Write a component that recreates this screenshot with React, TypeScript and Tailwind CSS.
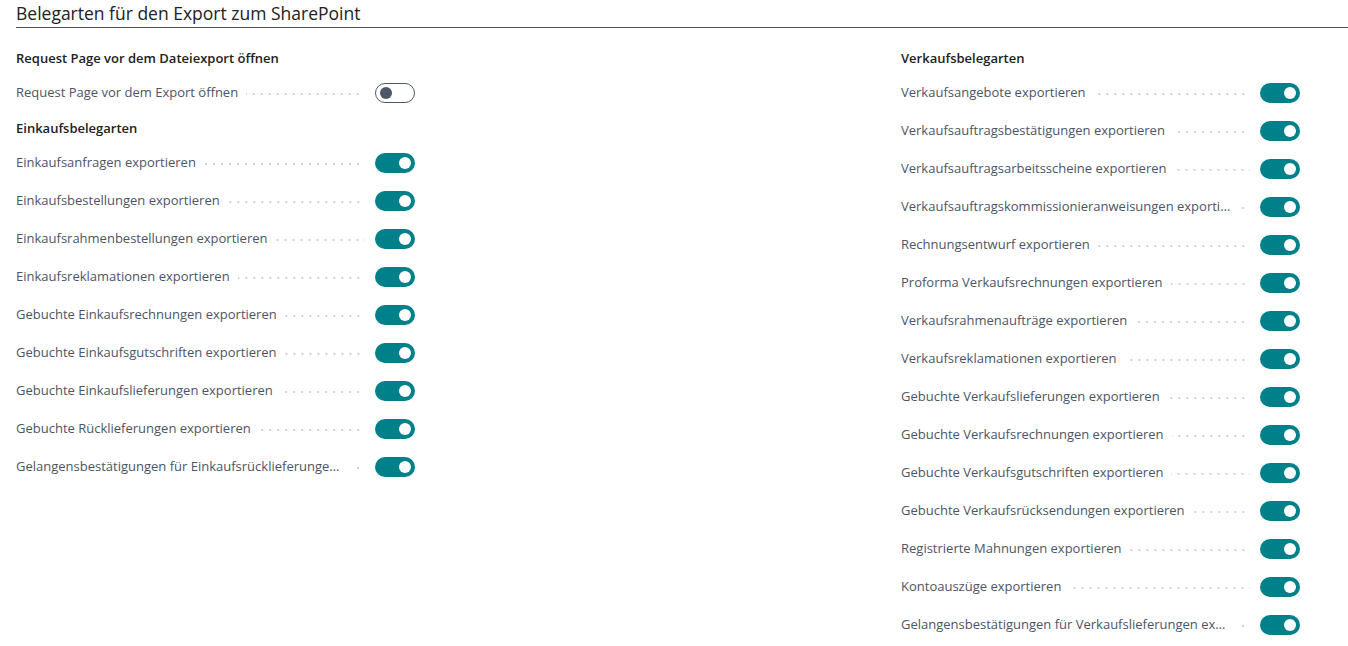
import React from 'react';

const FONT = "font-['Open_Sans','Noto_Sans',sans-serif]";

const EINKAUF = [
  'Einkaufsanfragen exportieren',
  'Einkaufsbestellungen exportieren',
  'Einkaufsrahmenbestellungen exportieren',
  'Einkaufsreklamationen exportieren',
  'Gebuchte Einkaufsrechnungen exportieren',
  'Gebuchte Einkaufsgutschriften exportieren',
  'Gebuchte Einkaufslieferungen exportieren',
  'Gebuchte Rücklieferungen exportieren',
  'Gelangensbestätigungen für Einkaufsrücklieferungen exportieren',
];

const VERKAUF = [
  'Verkaufsangebote exportieren',
  'Verkaufsauftragsbestätigungen exportieren',
  'Verkaufsauftragsarbeitsscheine exportieren',
  'Verkaufsauftragskommissionieranweisungen exportieren',
  'Rechnungsentwurf exportieren',
  'Proforma Verkaufsrechnungen exportieren',
  'Verkaufsrahmenaufträge exportieren',
  'Verkaufsreklamationen exportieren',
  'Gebuchte Verkaufslieferungen exportieren',
  'Gebuchte Verkaufsrechnungen exportieren',
  'Gebuchte Verkaufsgutschriften exportieren',
  'Gebuchte Verkaufsrücksendungen exportieren',
  'Registrierte Mahnungen exportieren',
  'Kontoauszüge exportieren',
  'Gelangensbestätigungen für Verkaufslieferungen exportieren',
];

function Toggle({ on }: { on: boolean }) {
  if (on) {
    return (
      <span className="flex h-5 w-10 shrink-0 items-center justify-end rounded-full bg-[#00818a] pr-[4px]">
        <span className="h-3 w-3 rounded-full bg-white" />
      </span>
    );
  }
  return (
    <span className="flex h-5 w-10 shrink-0 items-center rounded-full border border-[#4f5666] bg-white pl-[4px]">
      <span className="h-3 w-3 rounded-full bg-[#4f5666]" />
    </span>
  );
}

function Field({ label, on = true }: { label: string; on?: boolean }) {
  return (
    <div className="flex h-[38px] w-[399px] items-center">
      <div className="flex min-w-0 flex-1 items-center pr-[10px]">
        <span className="truncate text-[13px] text-[#4c5566]">{label}</span>
        <span className="ml-[8px] mt-[2px] h-[2px] min-w-[10px] flex-1 bg-[linear-gradient(to_right,#d2d2d2_2px,transparent_2px)] bg-[length:8px_2px] bg-right bg-repeat-x" />
      </div>
      <Toggle on={on} />
    </div>
  );
}

function GroupTitle({ children, className = '' }: { children: React.ReactNode; className?: string }) {
  return (
    <div className={`mb-[6px] h-5 text-[13px] font-semibold leading-5 text-[#212121] ${className}`}>
      {children}
    </div>
  );
}

export default function App() {
  return (
    <div className={`${FONT} min-h-screen bg-white`}>
      <div className="ml-4 border-b border-[#505356] pt-[1px] pb-[2px]">
        <h1 className="text-[17.5px] leading-6 text-[#212121]">Belegarten für den Export zum SharePoint</h1>
      </div>

      <div className="flex pt-5">
        {/* Left column */}
        <div className="w-[901px] pl-4">
          <GroupTitle>Request Page vor dem Dateiexport öffnen</GroupTitle>
          <Field label="Request Page vor dem Export öffnen" on={false} />
          <GroupTitle className="mt-[6px]">Einkaufsbelegarten</GroupTitle>
          {EINKAUF.map((l) => (
            <Field key={l} label={l} />
          ))}
        </div>

        {/* Right column */}
        <div>
          <GroupTitle>Verkaufsbelegarten</GroupTitle>
          {VERKAUF.map((l) => (
            <Field key={l} label={l} />
          ))}
        </div>
      </div>
    </div>
  );
}
